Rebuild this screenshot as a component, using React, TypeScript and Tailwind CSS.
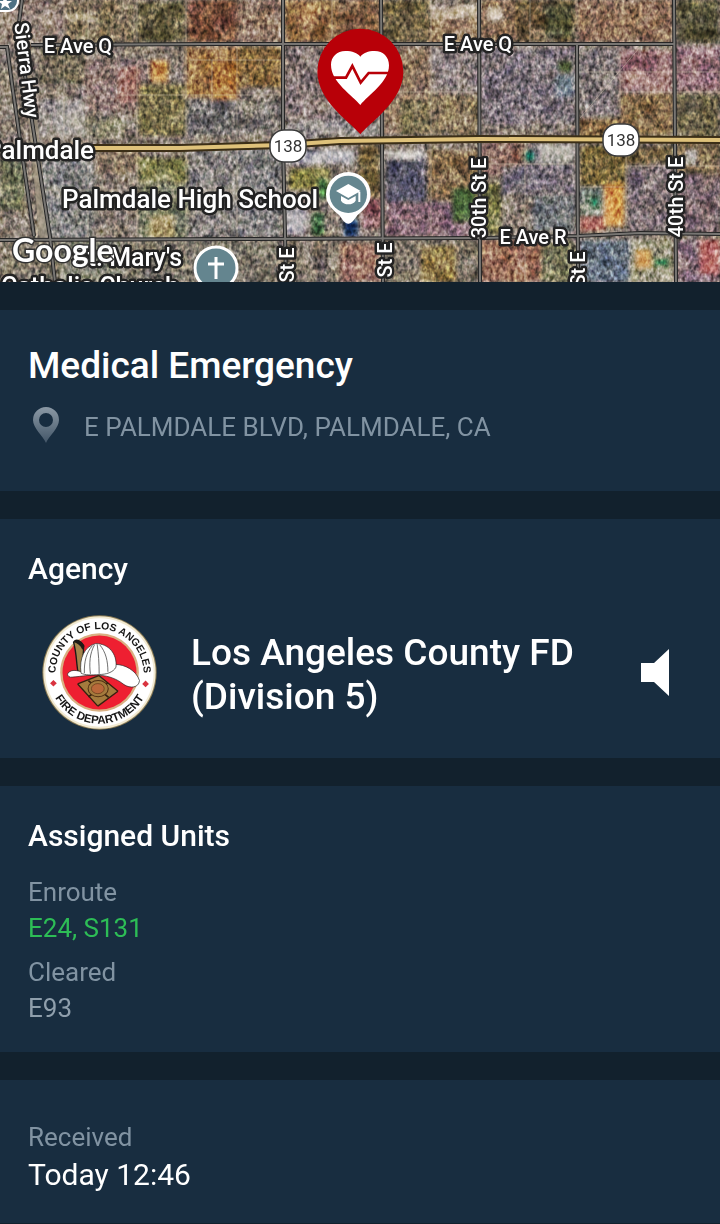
import type { ReactNode } from "react";

// [x, y, width, height, colour]
const patches: [number, number, number, number, string][] = [
  [0, 0, 64, 44, "#8f8176"],
  [64, 0, 70, 44, "#7d7259"],
  [66, 14, 30, 6, "#cfc4a8"],
  [137, 2, 48, 40, "#5f5a3c"],
  [187, 0, 50, 42, "#6f4c38"],
  [237, 0, 45, 42, "#8c7663"],
  [285, 0, 50, 42, "#8a6b45"],
  [300, 4, 18, 20, "#b08a5c"],
  [335, 0, 46, 42, "#765a40"],
  [383, 0, 48, 42, "#6a6142"],
  [430, 6, 48, 12, "#c4b8a0"],
  [430, 18, 48, 26, "#9c8468"],
  [481, 0, 34, 42, "#806850"],
  [488, 8, 14, 12, "#d8cdbd"],
  [515, 0, 60, 42, "#66563a"],
  [545, 4, 28, 34, "#515338"],
  [578, 0, 94, 42, "#8b7058"],
  [677, 0, 43, 42, "#55523a"],
  [40, 47, 45, 36, "#77715b"],
  [85, 60, 60, 52, "#8c7a74"],
  [118, 68, 22, 34, "#9a6f66"],
  [150, 60, 18, 22, "#bd8a48"],
  [186, 47, 52, 50, "#9b7748"],
  [212, 62, 26, 38, "#a8763a"],
  [238, 47, 44, 40, "#81683c"],
  [138, 84, 48, 52, "#77714b"],
  [186, 100, 54, 36, "#706f6e"],
  [40, 100, 45, 36, "#a09d98"],
  [85, 118, 40, 20, "#8b8a72"],
  [240, 100, 42, 34, "#7f7b76"],
  [285, 47, 96, 86, "#827775"],
  [285, 122, 96, 14, "#9a9895"],
  [383, 47, 48, 86, "#8b7862"],
  [400, 100, 34, 34, "#7e7656"],
  [431, 47, 48, 46, "#8a8280"],
  [431, 94, 48, 40, "#86785c"],
  [481, 47, 94, 78, "#79737a"],
  [558, 61, 14, 12, "#53643a"],
  [556, 76, 18, 20, "#708390"],
  [578, 47, 42, 70, "#7f7978"],
  [620, 50, 53, 22, "#8f6a6e"],
  [620, 72, 53, 20, "#a48480"],
  [620, 93, 53, 42, "#836d4b"],
  [578, 118, 42, 20, "#7d643f"],
  [677, 47, 43, 44, "#93737a"],
  [677, 94, 43, 44, "#69634a"],
  [0, 160, 24, 50, "#6d7358"],
  [40, 158, 54, 80, "#828583"],
  [94, 150, 46, 24, "#8b7d68"],
  [138, 158, 50, 24, "#838555"],
  [138, 184, 50, 54, "#777e65"],
  [188, 146, 50, 92, "#858480"],
  [150, 216, 24, 22, "#a69769"],
  [238, 148, 44, 90, "#7e8080"],
  [285, 150, 70, 14, "#b9b9bd"],
  [290, 168, 40, 22, "#7e7b43"],
  [318, 178, 10, 20, "#386d38"],
  [312, 213, 12, 22, "#35613a"],
  [344, 219, 14, 18, "#1f4070"],
  [358, 145, 22, 56, "#665936"],
  [285, 205, 22, 30, "#aaa8ae"],
  [362, 198, 20, 30, "#7f525b"],
  [386, 160, 40, 42, "#545767"],
  [387, 151, 38, 8, "#d2d0cc"],
  [386, 203, 90, 34, "#816773"],
  [428, 150, 50, 50, "#7f6a4b"],
  [452, 188, 24, 34, "#456439"],
  [481, 142, 44, 34, "#8b7065"],
  [524, 151, 11, 10, "#10705b"],
  [512, 150, 8, 12, "#5f3429"],
  [536, 144, 38, 20, "#aaa9a3"],
  [481, 184, 20, 50, "#6e7042"],
  [502, 166, 74, 28, "#76717a"],
  [534, 196, 40, 36, "#6b7274"],
  [580, 146, 46, 40, "#716337"],
  [626, 146, 48, 18, "#766746"],
  [628, 166, 44, 66, "#7b7275"],
  [580, 188, 24, 28, "#859184"],
  [590, 196, 9, 12, "#12705a"],
  [604, 184, 20, 42, "#cd9448"],
  [580, 217, 24, 14, "#b37363"],
  [677, 142, 43, 32, "#7a6b4e"],
  [686, 150, 10, 14, "#c0bfb4"],
  [677, 174, 43, 60, "#7a6a6e"],
  [0, 240, 60, 42, "#85806f"],
  [60, 240, 60, 42, "#878a7b"],
  [120, 240, 160, 42, "#7a776a"],
  [285, 240, 96, 42, "#7b7568"],
  [340, 244, 40, 38, "#9b7768"],
  [383, 240, 96, 42, "#7f796a"],
  [420, 246, 36, 36, "#8e7b4c"],
  [481, 240, 60, 42, "#956e59"],
  [541, 242, 34, 40, "#76785a"],
  [580, 240, 50, 42, "#6b7987"],
  [630, 240, 44, 42, "#9b9a80"],
  [636, 250, 15, 18, "#cfa260"],
  [654, 258, 15, 9, "#0f6b43"],
  [677, 240, 43, 42, "#87737b"],
  [700, 240, 20, 34, "#b36b66"],
];

const streets = [
  "M88 0V238 M137 0V282 M186 0V282 M237 47V238 M332 0V44 M332 140V282",
  "M431 0V238 M525 140V282 M530 0V44 M620 47V115 M626 142V238 M64 0V140",
  "M383 92H479 M578 72H720 M620 92H720 M580 187H626 M626 166H720 M40 190H282",
  "M481 164H575 M120 95H282 M190 60H282 M212 60V100 M580 118L640 47",
];

const minorRoads = [
  "M31 45L210 44L674 44",
  "M283 0V141L286 282",
  "M381 0L383 282",
  "M479 0L480 282",
  "M577 44L578 282",
  "M674 0L676 282",
  "M0 47H7L12 84L34 236",
  "M0 240L240 239L480 238L578 236L640 233L720 234",
  "M22 0L18 30L28 95L50 237L55 282",
];

function MapLabel({ x, y, size = 20, rotate = 0, anchor = "middle", children }: {
  x: number;
  y: number;
  size?: number;
  rotate?: number;
  anchor?: "start" | "middle" | "end";
  children: ReactNode;
}) {
  return (
    <text
      transform={`translate(${x} ${y}) rotate(${rotate})`}
      textAnchor={anchor}
      fontSize={size}
      fontWeight="500"
      fill="#fff"
      stroke="#222"
      strokeWidth="5"
      strokeLinejoin="round"
      paintOrder="stroke"
    >
      {children}
    </text>
  );
}

function RouteShield({ x, y }: { x: number; y: number }) {
  return (
    <g transform={`translate(${x} ${y})`}>
      <rect x="-18" y="-16" width="36" height="32" rx="14" fill="#fff" stroke="#3b3b3b" strokeWidth="1.5" />
      <text y="6" textAnchor="middle" fontSize="17" fill="#333">138</text>
    </g>
  );
}

function IncidentMap() {
  return (
    <svg
      className="block h-[282px] w-full bg-[#857d72] font-[Roboto,sans-serif]"
      viewBox="0 0 720 282"
      preserveAspectRatio="xMidYMid slice"
      role="img"
      aria-label="Satellite map of the incident location"
    >
      <defs>
        <filter id="soften"><feGaussianBlur stdDeviation="2" /></filter>
        <filter id="grain" x="0" y="0" width="100%" height="100%" colorInterpolationFilters="sRGB">
          <feTurbulence type="fractalNoise" baseFrequency="0.28 0.2" numOctaves="2" seed="8" />
          <feColorMatrix values="1.5 .7 .1 0 -.62  1.3 .8 .1 0 -.6  1.3 .7 .2 0 -.6  0 0 0 0 1" />
        </filter>
        <filter id="ground" x="0" y="0" width="100%" height="100%" colorInterpolationFilters="sRGB">
          <feTurbulence type="fractalNoise" baseFrequency="0.07" numOctaves="3" seed="3" />
          <feColorMatrix values="1.6 .6 0 0 -.6  1.5 .7 0 0 -.6  1.2 .6 .4 0 -.6  0 0 0 0 1" />
        </filter>
      </defs>

      <g filter="url(#soften)">
        {patches.map(([x, y, w, h, color]) => (
          <rect key={`${x}-${y}`} x={x} y={y} width={w} height={h} fill={color} />
        ))}
      </g>
      <rect width="720" height="282" filter="url(#ground)" opacity=".6" className="mix-blend-soft-light" />
      <rect width="720" height="282" filter="url(#grain)" opacity=".6" className="mix-blend-overlay" />
      <g fill="none" stroke="#d2c6b0" strokeWidth="1" opacity=".45">
        {streets.map((d) => <path key={d} d={d} />)}
      </g>

      {/* rail corridor beside Sierra Hwy */}
      <path d="M20 20L34 130L44 238" fill="none" stroke="#a69b84" strokeWidth="9" opacity=".7" />
      <g fill="none" stroke="#262626" strokeWidth="4">
        {minorRoads.map((d) => <path key={d} d={d} />)}
      </g>
      <g fill="none" stroke="#777572" strokeWidth="2">
        {minorRoads.map((d) => <path key={d} d={d} />)}
      </g>
      <path d="M90 148L180 148L283 145L340 141L480 139L720 140" fill="none" stroke="#3b2e17" strokeWidth="8" />
      <path d="M90 148L180 148L283 145L340 141L480 139L720 140" fill="none" stroke="#dfc27b" strokeWidth="4" />

      <rect x="-14" y="-14" width="32" height="25" rx="10" fill="#4f7183" stroke="#fff" strokeWidth="2" />
      <path d="M5 -4L7 1L12 1L8 4L10 9L5 6L1 9L2 4L-2 1L3 1Z" fill="#fff" />

      <MapLabel x={78} y={53}>E Ave Q</MapLabel>
      <MapLabel x={478} y={51}>E Ave Q</MapLabel>
      <MapLabel x={533} y={244}>E Ave R</MapLabel>
      <MapLabel x={20} y={71} rotate={83}>Sierra Hwy</MapLabel>
      <MapLabel x={486} y={198} rotate={-90}>30th St E</MapLabel>
      <MapLabel x={683} y={197} rotate={-90}>40th St E</MapLabel>
      <MapLabel x={294} y={265} rotate={-90}>St E</MapLabel>
      <MapLabel x={392} y={260} rotate={-90}>St E</MapLabel>
      <MapLabel x={585} y={269} rotate={-90}>St E</MapLabel>
      <MapLabel x={94} y={159} size={26} anchor="end">Palmdale</MapLabel>
      <MapLabel x={190} y={208} size={26}>Palmdale High School</MapLabel>
      <MapLabel x={182} y={266} size={25} anchor="end">St. Mary's</MapLabel>
      <MapLabel x={90} y={295} size={25}>Catholic Church</MapLabel>
      <RouteShield x={288} y={146} />
      <RouteShield x={621} y={140} />

      {/* church */}
      <circle cx="216" cy="268" r="21" fill="#64858f" stroke="#fff" strokeWidth="3" />
      <path d="M216 257V279M208 264H224" stroke="#fff" strokeWidth="3" />

      {/* school */}
      <g transform="translate(240 0) scale(.33333)">
        <path d="M325 671C315 671 308 660 298 646C280 630 258 614 258 583A67 67 0 0 1 392 583C392 614 370 630 352 646C342 660 335 671 325 671Z" fill="#fff" />
        <circle cx="325" cy="583" r="56" fill="#65868f" />
        <path d="M325 552L362 573L325 594L288 573Z M303 588L325 600L347 588V602C342 610 334 613 325 613C316 613 308 610 303 602Z M355 576H361V606H355Z" fill="#fff" />
      </g>

      {/* incident */}
      <g transform="translate(240 0) scale(.33333)">
        <path d="M361 403C338 371 232 305 232 215A129 129 0 0 1 490 215C490 305 384 371 361 403Z" fill="#b80008" />
        <path d="M361 315C338 286 273 247 273 194C273 171 291 153 316 153C337 153 352 159 361 170C370 159 384 153 404 153C430 153 447 171 447 196C447 247 384 286 361 315Z" fill="#fff" />
        <path d="M270 233H318L337 198L362 248L386 219H450" fill="none" stroke="#b80008" strokeWidth="8" />
      </g>

      <text x="12" y="262" fontSize="32" fontWeight="700" fill="#fff" stroke="#333" strokeWidth="3" paintOrder="stroke" className="font-[Lato,sans-serif]">
        Google
      </text>
    </svg>
  );
}

function AgencySeal() {
  return (
    <svg className="size-[115px] shrink-0" viewBox="38 31 342 342" role="img" aria-label="County of Los Angeles Fire Department seal">
      <defs>
        <path id="seal-top" d="M78 204A131 131 0 0 1 340 204" />
        <path id="seal-bottom" d="M57 202A152 152 0 0 0 361 202" />
      </defs>
      <circle cx="209" cy="202" r="170" fill="#8d7d55" />
      <circle cx="209" cy="202" r="167" fill="#f2ead2" />
      <circle cx="209" cy="202" r="161" fill="#fff" />
      <circle cx="209" cy="202" r="117" fill="#d9b083" />
      <circle cx="209" cy="202" r="110" fill="#ee1f31" />
      <g fill="#161616" fontSize="31" fontWeight="700" textAnchor="middle" className="font-['Liberation_Sans',sans-serif]">
        <text><textPath href="#seal-top" startOffset="50%">COUNTY OF LOS ANGELES</textPath></text>
        <text fontSize="34"><textPath href="#seal-bottom" startOffset="50%">FIRE DEPARTMENT</textPath></text>
      </g>
      <path d="M72 224L82 234L72 244L62 234Z M346 226L356 236L346 246L336 236Z" fill="#d9333f" />
      {/* helmet */}
      <path d="M132 112C140 100 154 108 162 122L158 200L146 206C140 180 142 150 132 112Z" fill="#a3844b" stroke="#1c1a17" strokeWidth="4" />
      <path d="M132 112C140 100 156 108 164 124L158 134C152 120 142 114 132 112Z" fill="#1c1a17" />
      <path d="M115 204C130 188 148 200 170 202C205 196 235 186 256 178C285 178 318 196 328 226C326 248 300 250 282 238C262 222 238 212 208 210C178 208 140 216 122 216C116 214 112 208 115 204Z" fill="#fff" stroke="#222" strokeWidth="2" />
      <path d="M154 204C148 160 164 124 198 116C236 116 262 146 258 186C250 202 228 208 208 208C186 210 166 210 154 204Z" fill="#fff" stroke="#222" strokeWidth="2" />
      <path d="M194 120C180 145 178 175 182 206M202 118C206 145 208 175 208 206M210 120C228 142 234 168 234 200M188 122C170 142 163 170 164 204" fill="none" stroke="#555" strokeWidth="2.5" />
      {/* badge */}
      <path d="M207 211L262 258L204 302L144 238Z" fill="#a47b3d" />
      <path d="M207 211L264 258M204 302L144 236M144 236L207 211M264 258L204 302" fill="none" stroke="#33220f" strokeWidth="4" />
      <path d="M176 226L236 276M234 232L176 274" stroke="#33220f" strokeWidth="5" />
      <ellipse cx="205" cy="250" rx="30" ry="24" fill="#a47b3d" stroke="#4d2e12" strokeWidth="3" />
      <ellipse cx="204" cy="250" rx="19" ry="15" fill="#b9683a" stroke="#5e3517" strokeWidth="2" />
    </svg>
  );
}

function LocationIcon() {
  return (
    <svg className="h-10 w-7 shrink-0 pb-1" viewBox="0 0 28 36" aria-hidden="true">
      <defs>
        <linearGradient id="pin-shade" x1="0" y1="0" x2="0" y2="1">
          <stop offset="0" stopColor="#8b99a5" />
          <stop offset="1" stopColor="#435668" />
        </linearGradient>
      </defs>
      <path fill="url(#pin-shade)" fillRule="evenodd" d="M14 36C11 29 1 21 1 13A13 13 0 0 1 27 13C27 21 17 29 14 36ZM14 6A7 7 0 1 0 14 20A7 7 0 1 0 14 6Z" />
    </svg>
  );
}

function SpeakerIcon() {
  return (
    <svg className="h-[47px] w-7" viewBox="0 0 28 47" aria-hidden="true">
      <path d="M0 14H13L28 0V47L13 33H0Z" fill="#fff" />
    </svg>
  );
}

const units = [
  { status: "Enroute", list: "E24, S131", color: "text-[#2dbd56]" },
  { status: "Cleared", list: "E93", color: "text-[#8f9fac]" },
];

export default function App() {
  return (
    <main className="flex min-h-screen flex-col gap-7 bg-[#12212d] pb-0.5 font-[Roboto,sans-serif] text-white">
      <IncidentMap />

      <section className="bg-[#182d40] px-7 pt-8 pb-11">
        <h1 className="text-[37px] leading-[48px] font-medium">Medical Emergency</h1>
        <p className="mt-[17px] flex items-center gap-6 pl-1 text-[26px] leading-9 text-[#8193a2]">
          <LocationIcon />
          E PALMDALE BLVD, PALMDALE, CA
        </p>
      </section>

      <section className="bg-[#182d40] px-7 pt-8 pb-7">
        <h2 className="text-[30px] leading-9 font-medium">Agency</h2>
        <div className="mt-7 flex items-center pl-3.5">
          <AgencySeal />
          <p className="ml-[34px] flex-1 pt-1 text-[37px] leading-11 font-medium">
            Los Angeles County FD
            <br />
            (Division 5)
          </p>
          <button type="button" aria-label="Listen live" className="mr-[23px] cursor-pointer">
            <SpeakerIcon />
          </button>
        </div>
      </section>

      <section className="bg-[#182d40] px-7 pt-8 pb-[26px]">
        <h2 className="text-[30px] leading-9 font-medium">Assigned Units</h2>
        <dl className="mt-5 flex flex-col gap-2 text-[26px] leading-9">
          {units.map((unit) => (
            <div key={unit.status}>
              <dt className="text-[#8193a2]">{unit.status}</dt>
              <dd className={unit.color}>{unit.list}</dd>
            </div>
          ))}
        </dl>
      </section>

      <section className="grow bg-[#182d40] px-7 pt-[39px] pb-7">
        <dl>
          <dt className="text-[26px] leading-9 text-[#8193a2]">Received</dt>
          <dd className="text-[30px] leading-10">Today 12:46</dd>
        </dl>
      </section>
    </main>
  );
}
